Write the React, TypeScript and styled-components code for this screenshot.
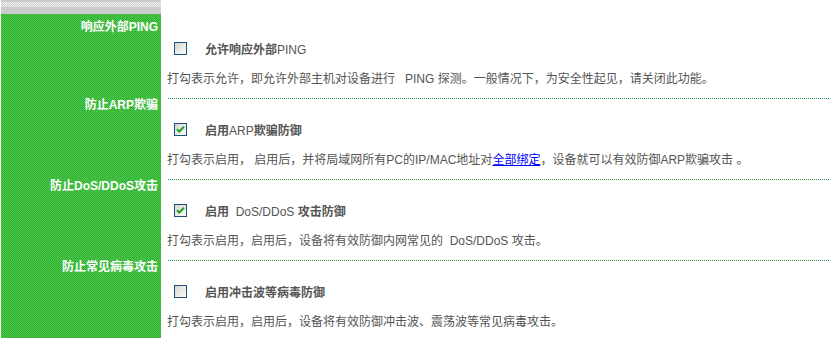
import styled, { createGlobalStyle } from "styled-components";
import React from "react";

const GlobalStyle = createGlobalStyle`
  html, body {
    margin: 0;
    padding: 0;
    background: #fff;
  }
  body {
    font-family: "Liberation Sans", "Noto Sans CJK SC", sans-serif;
    font-size: 12px;
    color: #555;
  }
`;

const Page = styled.div`
  display: flex;
  flex-direction: column;
  min-height: 100vh;
  padding-left: 1px;
  box-sizing: border-box;
`;

const HeaderRow = styled.div`
  display: grid;
  grid-template-columns: 160px 1fr;
`;

const HeaderCell = styled.div`
  height: 14px;
  background: #cbcbcb;
  padding-top: 2px;
  box-sizing: border-box;
`;

const Dots = styled.div`
  height: 5px;
  background-color: #cbcbcb;
  background-image: repeating-conic-gradient(#f4f4f4 0 25%, #cbcbcb 0 50%);
  background-size: 2px 2px;
`;

const Section = styled.div<{ $last: boolean }>`
  display: grid;
  grid-template-columns: 160px 1fr;
  flex: ${(p) => (p.$last ? 1 : "none")};
`;

const SideCell = styled.div`
  background-color: #3dbd3d;
  background-image: repeating-conic-gradient(#33b033 0 25%, #4ac84a 0 50%);
  background-size: 2px 2px;
`;

const Title = styled.div<{ $first: boolean }>`
  padding: ${(p) => (p.$first ? "6px" : "0")} 3px 0 0;
  line-height: 14px;
  text-align: right;
  color: #fff;
  font-weight: bold;
`;

const Latin = styled.span<{ $light?: boolean }>`
  font-weight: ${(p) => (p.$light ? "normal" : "bold")};
`;

const Body = styled.div<{ $first: boolean }>`
  margin: 0 2px 0 7px;
  padding: ${(p) => (p.$first ? "21px" : "18px")} 0 5px;
  background-image: ${(p) =>
    p.$first ? "none" : "repeating-linear-gradient(to right, #1f9a45 0 1px, transparent 1px 2px)"};
  background-size: 100% 1px;
  background-repeat: no-repeat;
  background-position: top left;
`;

const CheckRow = styled.div`
  display: flex;
  align-items: center;
  height: 26px;
  padding-left: 6px;
`;

const Box = styled.span<{ $checked: boolean }>`
  width: 13px;
  height: 13px;
  box-sizing: border-box;
  border: 1px solid #1c5180;
  background: linear-gradient(135deg, #d6d6d0, #fbfbfb);
  display: flex;
  align-items: center;
  justify-content: center;
`;

const Label = styled.span`
  margin-left: 18px;
  font-weight: bold;
  color: #555;
`;

const Note = styled.div`
  height: 32px;
  display: flex;
  align-items: center;
  margin-left: -1px;
  color: #555;
  white-space: nowrap;
`;

const Link = styled.a`
  color: #0000ff;
  text-decoration: underline;
`;

interface Feature {
  title: React.ReactNode;
  label: React.ReactNode;
  checked: boolean;
  note: React.ReactNode;
}

const features: Feature[] = [
  {
    title: <>响应外部<Latin>PING</Latin></>,
    label: <>允许响应外部<Latin $light>PING</Latin></>,
    checked: false,
    note: <>打勾表示允许，即允许外部主机对设备进行{"\u00a0\u00a0 "}PING 探测。一般情况下，为安全性起见，请关闭此功能。</>,
  },
  {
    title: <>防止<Latin>ARP</Latin>欺骗</>,
    label: <>启用<Latin $light>ARP</Latin>欺骗防御</>,
    checked: true,
    note: (
      <>
        打勾表示启用，{"\u00a0"}启用后，并将局域网所有PC的IP/MAC地址对<Link href="#">全部绑定</Link>，设备就可以有效防御ARP欺骗攻击{"\u00a0"}。
      </>
    ),
  },
  {
    title: <>防止<Latin>DoS/DDoS</Latin>攻击</>,
    label: <>启用{"\u00a0 "}<Latin $light>DoS/DDoS</Latin> 攻击防御</>,
    checked: true,
    note: <>打勾表示启用，启用后，设备将有效防御内网常见的{"\u00a0 "}DoS/DDoS 攻击。</>,
  },
  {
    title: <>防止常见病毒攻击</>,
    label: <>启用冲击波等病毒防御</>,
    checked: false,
    note: <>打勾表示启用，启用后，设备将有效防御冲击波、震荡波等常见病毒攻击。</>,
  },
];

export default function App() {
  return (
    <>
      <GlobalStyle />
      <Page>
        <HeaderRow>
          <HeaderCell>
            <Dots />
          </HeaderCell>
          <div />
        </HeaderRow>
        {features.map((f, i) => (
          <Section key={i} $last={i === features.length - 1}>
            <SideCell>
              <Title $first={i === 0}>{f.title}</Title>
            </SideCell>
            <Body $first={i === 0}>
              <CheckRow>
                <Box $checked={f.checked}>
                  {f.checked && (
                    <svg width="11" height="11" viewBox="0 0 11 11">
                      <path d="M2 5.2 L4.3 7.5 L9 2.8" fill="none" stroke="#21a121" strokeWidth="2" />
                    </svg>
                  )}
                </Box>
                <Label>{f.label}</Label>
              </CheckRow>
              <Note>{f.note}</Note>
            </Body>
          </Section>
        ))}
      </Page>
    </>
  );
}
